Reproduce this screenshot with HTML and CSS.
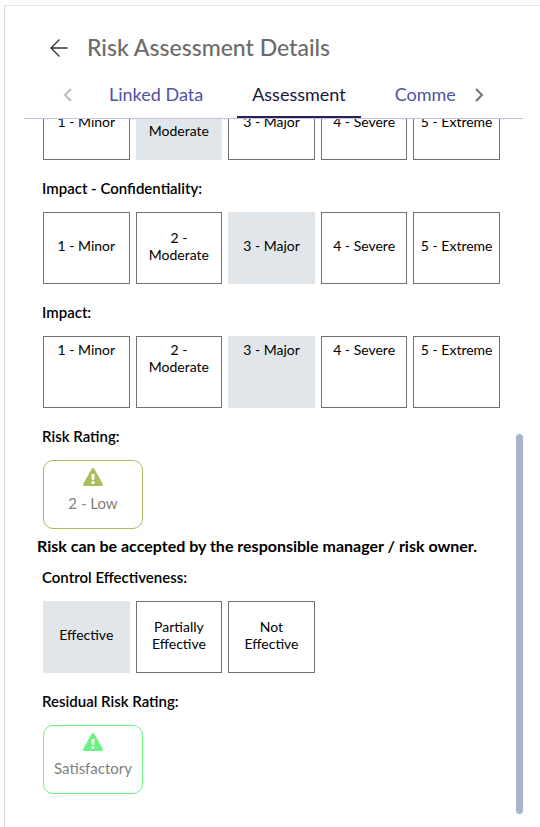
FILE: index.html
```html
<!DOCTYPE html>
<html lang="en">
<head>
<meta charset="UTF-8">
<meta name="viewport" content="width=device-width, initial-scale=1.0">
<title>Risk Assessment Details</title>
<link rel="stylesheet" href="styles.css">
</head>
<body>
<main class="panel">
    <header class="header">
        <button class="icon-button" aria-label="Back">
            <svg width="18" height="20" viewBox="0 0 18 20" fill="none" stroke="#333" stroke-width="1.3"><path d="M17.5 10H1.2M9.5 1.5L1 10l8.5 8.5"/></svg>
        </button>
        <h1 class="title">Risk Assessment Details</h1>
    </header>

    <nav class="tabs">
        <button class="icon-button tab-arrow" aria-label="Previous tabs" disabled>
            <svg width="10" height="14" viewBox="0 0 10 14" fill="none" stroke="#bdbdbd" stroke-width="2"><path d="M8 1L2 7l6 6"/></svg>
        </button>
        <div class="tab-list">
            <a class="tab" href="#linked">Linked Data</a>
            <a class="tab active" href="#assessment" aria-current="page">Assessment</a>
            <a class="tab" href="#comments">Comme</a>
        </div>
        <button class="icon-button tab-arrow" aria-label="Next tabs">
            <svg width="10" height="14" viewBox="0 0 10 14" fill="none" stroke="#757575" stroke-width="2"><path d="M2 1l6 6-6 6"/></svg>
        </button>
    </nav>

    <div class="content" id="assessment">
        <section class="field">
            <div class="options">
                <button class="option">1 - Minor</button>
                <button class="option selected" aria-pressed="true">2 - Moderate</button>
                <button class="option">3 - Major</button>
                <button class="option">4 - Severe</button>
                <button class="option">5 - Extreme</button>
            </div>
        </section>

        <section class="field">
            <h2 class="label">Impact - Confidentiality:</h2>
            <div class="options">
                <button class="option">1 - Minor</button>
                <button class="option">2 - Moderate</button>
                <button class="option selected" aria-pressed="true">3 - Major</button>
                <button class="option">4 - Severe</button>
                <button class="option">5 - Extreme</button>
            </div>
        </section>

        <section class="field">
            <h2 class="label">Impact:</h2>
            <!-- calculated, not editable -->
            <div class="options">
                <div class="option readonly">1 - Minor</div>
                <div class="option readonly">2 - Moderate</div>
                <div class="option readonly selected">3 - Major</div>
                <div class="option readonly">4 - Severe</div>
                <div class="option readonly">5 - Extreme</div>
            </div>
        </section>

        <section class="field">
            <h2 class="label">Risk Rating:</h2>
            <div class="rating low">
                <svg class="rating-icon" width="20" height="18" viewBox="0 0 20 18"><path fill="currentColor" d="M8.7.8a1.5 1.5 0 0 1 2.6 0l8.4 14.9A1.5 1.5 0 0 1 18.4 18H1.6a1.5 1.5 0 0 1-1.3-2.3z"/><path fill="#fff" d="M8.4 6h3.2l-.4 6H8.8z"/><circle cx="10" cy="14.5" r="1.5" fill="#fff"/></svg>
                <span class="rating-text">2 - Low</span>
            </div>
        </section>

        <p class="note">Risk can be accepted by the responsible manager / risk owner.</p>

        <section class="field">
            <h2 class="label">Control Effectiveness:</h2>
            <div class="options">
                <button class="option selected" aria-pressed="true">Effective</button>
                <button class="option">Partially Effective</button>
                <button class="option">Not Effective</button>
            </div>
        </section>

        <section class="field">
            <h2 class="label">Residual Risk Rating:</h2>
            <div class="rating satisfactory">
                <svg class="rating-icon" width="20" height="18" viewBox="0 0 20 18"><path fill="currentColor" d="M8.7.8a1.5 1.5 0 0 1 2.6 0l8.4 14.9A1.5 1.5 0 0 1 18.4 18H1.6a1.5 1.5 0 0 1-1.3-2.3z"/><path fill="#fff" d="M8.4 6h3.2l-.4 6H8.8z"/><circle cx="10" cy="14.5" r="1.5" fill="#fff"/></svg>
                <span class="rating-text">Satisfactory</span>
            </div>
        </section>
        <div class="scroll-thumb"></div>
    </div>
</main>
</body>
</html>
```
FILE: styles.css
```css
* {
    box-sizing: border-box;
}
body {
    margin: 0;
    padding: 5px 0 0 4px;
    height: 100vh;
    font-family: Lato, sans-serif;
    color: #000;
    background-color: #fff;
    overflow: hidden;
}
.panel {
    display: flex;
    flex-direction: column;
    height: 100%;
    padding: 0 17px 0 19px;
    border-top: 1px solid #e6e6f2;
    border-left: 1px solid #d9d9de;
}
.header {
    display: flex;
    align-items: center;
    gap: 19px;
    height: 65px;
    padding: 18px 26px 0;
}
.icon-button {
    display: flex;
    padding: 0;
    border: none;
    background: none;
    cursor: pointer;
}
.title {
    margin: 0;
    padding-bottom: 2px;
    font-size: 23px;
    font-weight: 500;
    line-height: 30px;
    color: #6b6b6b;
}
.tabs {
    display: flex;
    align-items: stretch;
    height: 48px;
    padding: 0 39px;
    border-bottom: 1px solid #c5c2e0;
}
.tab-arrow {
    align-items: center;
}
.tab-list {
    display: flex;
    flex: 1;
    gap: 19px;
    padding: 0 15px 0 21px;
    overflow: hidden;
}
.tab {
    padding: 8px 15px 0;
    font-size: 18px;
    line-height: 30px;
    color: #4f52a3;
    text-decoration: none;
    white-space: nowrap;
}
.tab.active {
    color: #17173a;
    border-bottom: 2px solid #25225c;
}
/* kept at the end of the form */
.content {
    position: relative;
    display: flex;
    flex: 1;
    flex-direction: column;
    justify-content: flex-end;
    min-height: 0;
    padding: 0 22px 33px 13px;
    overflow: hidden;
}
.field {
    padding: 0 0 0 5px;
}
.field + .field {
    margin-top: 18px;
}
.label {
    margin: 0 0 14px;
    font-size: 15px;
    font-weight: 600;
    line-height: 20px;
}
.options {
    display: grid;
    grid-template-columns: repeat(5, minmax(0, 1fr));
    gap: 6px;
    padding: 0 1px;
}
.option {
    height: 72px;
    padding: 0 6px 5px;
    border: 1px solid #707070;
    background-color: #fff;
    color: #000;
    font-family: inherit;
    font-size: 14px;
    line-height: 17px;
    text-align: center;
    cursor: pointer;
}
.option.readonly {
    padding-top: 4px;
    cursor: default;
}
.option.selected {
    border-color: #e1e6ea;
    background-color: #e1e6ea;
}
.rating {
    display: flex;
    flex-direction: column;
    align-items: center;
    gap: 7px;
    width: 100px;
    height: 69px;
    margin-left: 1px;
    padding-top: 7px;
    border: 1px solid currentColor;
    border-radius: 10px;
}
.rating.low {
    color: #a8bd5c;
}
.rating.satisfactory {
    color: #69f57d;
}
.rating-text {
    font-size: 15px;
    line-height: 20px;
    color: #808080;
}
.note {
    margin: 5px 0 9px;
    font-size: 16px;
    font-weight: 700;
    line-height: 24px;
}
.scroll-thumb {
    position: absolute;
    right: 0;
    bottom: 13px;
    width: 7px;
    height: 380px;
    border-radius: 4px;
    background-color: #abb4cb;
}
```
